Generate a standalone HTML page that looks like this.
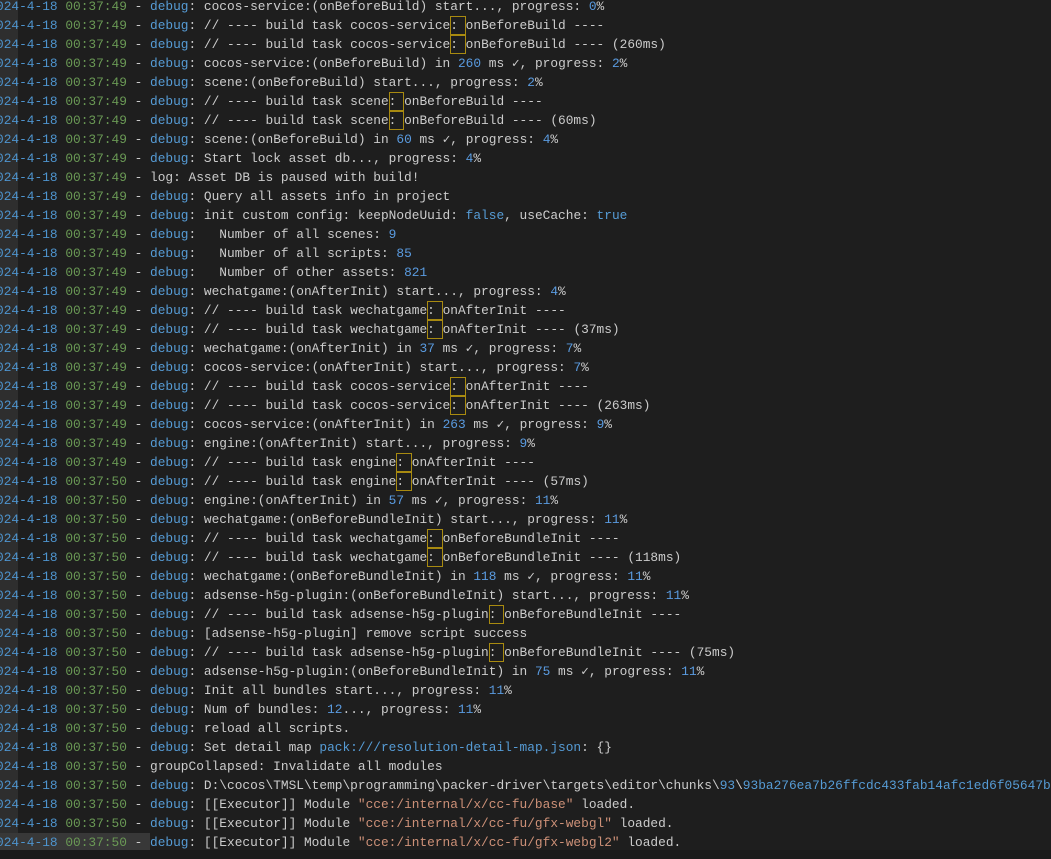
<!DOCTYPE html>
<html><head><meta charset="utf-8"><style>
html,body{margin:0;padding:0;background:#1e1e1e;width:1051px;height:859px;overflow:hidden;}
#strip{position:absolute;left:0;top:0;width:18px;height:850px;background:#2e2e2e;}
#hl{position:absolute;left:0;top:833px;width:150px;height:17px;background:#383838;}
#bot{position:absolute;left:0;top:850px;width:1051px;height:9px;background:#1a1a1a;}
#log{position:absolute;left:-11.7px;top:-3.5px;font-family:"Liberation Mono",monospace;font-size:12.83px;line-height:19px;color:#cccccc;white-space:pre;}
.d{color:#4e94ce}.t{color:#6a9955}.k{color:#569cd6}.n{color:#5a9be0}.s{color:#ce9178}
.b{outline:1px solid #a88a10;outline-offset:-1px;display:inline-block;height:19px;vertical-align:top}
</style></head><body>
<div id="strip"></div><div id="hl"></div><div id="bot"></div>
<div id="log"><span class="d">2024-4-18</span> <span class="t">00:37:49</span> - <span class="k">debug</span>: cocos-service:(onBeforeBuild) start..., progress: <span class="n">0</span>%
<span class="d">2024-4-18</span> <span class="t">00:37:49</span> - <span class="k">debug</span>: // ---- build task cocos-service<span class="b">: </span>onBeforeBuild ----
<span class="d">2024-4-18</span> <span class="t">00:37:49</span> - <span class="k">debug</span>: // ---- build task cocos-service<span class="b">: </span>onBeforeBuild ---- (260ms)
<span class="d">2024-4-18</span> <span class="t">00:37:49</span> - <span class="k">debug</span>: cocos-service:(onBeforeBuild) in <span class="n">260</span> ms ✓, progress: <span class="n">2</span>%
<span class="d">2024-4-18</span> <span class="t">00:37:49</span> - <span class="k">debug</span>: scene:(onBeforeBuild) start..., progress: <span class="n">2</span>%
<span class="d">2024-4-18</span> <span class="t">00:37:49</span> - <span class="k">debug</span>: // ---- build task scene<span class="b">: </span>onBeforeBuild ----
<span class="d">2024-4-18</span> <span class="t">00:37:49</span> - <span class="k">debug</span>: // ---- build task scene<span class="b">: </span>onBeforeBuild ---- (60ms)
<span class="d">2024-4-18</span> <span class="t">00:37:49</span> - <span class="k">debug</span>: scene:(onBeforeBuild) in <span class="n">60</span> ms ✓, progress: <span class="n">4</span>%
<span class="d">2024-4-18</span> <span class="t">00:37:49</span> - <span class="k">debug</span>: Start lock asset db..., progress: <span class="n">4</span>%
<span class="d">2024-4-18</span> <span class="t">00:37:49</span> - log: Asset DB is paused with build!
<span class="d">2024-4-18</span> <span class="t">00:37:49</span> - <span class="k">debug</span>: Query all assets info in project
<span class="d">2024-4-18</span> <span class="t">00:37:49</span> - <span class="k">debug</span>: init custom config: keepNodeUuid: <span class="k">false</span>, useCache: <span class="k">true</span>
<span class="d">2024-4-18</span> <span class="t">00:37:49</span> - <span class="k">debug</span>:   Number of all scenes: <span class="n">9</span>
<span class="d">2024-4-18</span> <span class="t">00:37:49</span> - <span class="k">debug</span>:   Number of all scripts: <span class="n">85</span>
<span class="d">2024-4-18</span> <span class="t">00:37:49</span> - <span class="k">debug</span>:   Number of other assets: <span class="n">821</span>
<span class="d">2024-4-18</span> <span class="t">00:37:49</span> - <span class="k">debug</span>: wechatgame:(onAfterInit) start..., progress: <span class="n">4</span>%
<span class="d">2024-4-18</span> <span class="t">00:37:49</span> - <span class="k">debug</span>: // ---- build task wechatgame<span class="b">: </span>onAfterInit ----
<span class="d">2024-4-18</span> <span class="t">00:37:49</span> - <span class="k">debug</span>: // ---- build task wechatgame<span class="b">: </span>onAfterInit ---- (37ms)
<span class="d">2024-4-18</span> <span class="t">00:37:49</span> - <span class="k">debug</span>: wechatgame:(onAfterInit) in <span class="n">37</span> ms ✓, progress: <span class="n">7</span>%
<span class="d">2024-4-18</span> <span class="t">00:37:49</span> - <span class="k">debug</span>: cocos-service:(onAfterInit) start..., progress: <span class="n">7</span>%
<span class="d">2024-4-18</span> <span class="t">00:37:49</span> - <span class="k">debug</span>: // ---- build task cocos-service<span class="b">: </span>onAfterInit ----
<span class="d">2024-4-18</span> <span class="t">00:37:49</span> - <span class="k">debug</span>: // ---- build task cocos-service<span class="b">: </span>onAfterInit ---- (263ms)
<span class="d">2024-4-18</span> <span class="t">00:37:49</span> - <span class="k">debug</span>: cocos-service:(onAfterInit) in <span class="n">263</span> ms ✓, progress: <span class="n">9</span>%
<span class="d">2024-4-18</span> <span class="t">00:37:49</span> - <span class="k">debug</span>: engine:(onAfterInit) start..., progress: <span class="n">9</span>%
<span class="d">2024-4-18</span> <span class="t">00:37:49</span> - <span class="k">debug</span>: // ---- build task engine<span class="b">: </span>onAfterInit ----
<span class="d">2024-4-18</span> <span class="t">00:37:50</span> - <span class="k">debug</span>: // ---- build task engine<span class="b">: </span>onAfterInit ---- (57ms)
<span class="d">2024-4-18</span> <span class="t">00:37:50</span> - <span class="k">debug</span>: engine:(onAfterInit) in <span class="n">57</span> ms ✓, progress: <span class="n">11</span>%
<span class="d">2024-4-18</span> <span class="t">00:37:50</span> - <span class="k">debug</span>: wechatgame:(onBeforeBundleInit) start..., progress: <span class="n">11</span>%
<span class="d">2024-4-18</span> <span class="t">00:37:50</span> - <span class="k">debug</span>: // ---- build task wechatgame<span class="b">: </span>onBeforeBundleInit ----
<span class="d">2024-4-18</span> <span class="t">00:37:50</span> - <span class="k">debug</span>: // ---- build task wechatgame<span class="b">: </span>onBeforeBundleInit ---- (118ms)
<span class="d">2024-4-18</span> <span class="t">00:37:50</span> - <span class="k">debug</span>: wechatgame:(onBeforeBundleInit) in <span class="n">118</span> ms ✓, progress: <span class="n">11</span>%
<span class="d">2024-4-18</span> <span class="t">00:37:50</span> - <span class="k">debug</span>: adsense-h5g-plugin:(onBeforeBundleInit) start..., progress: <span class="n">11</span>%
<span class="d">2024-4-18</span> <span class="t">00:37:50</span> - <span class="k">debug</span>: // ---- build task adsense-h5g-plugin<span class="b">: </span>onBeforeBundleInit ----
<span class="d">2024-4-18</span> <span class="t">00:37:50</span> - <span class="k">debug</span>: [adsense-h5g-plugin] remove script success
<span class="d">2024-4-18</span> <span class="t">00:37:50</span> - <span class="k">debug</span>: // ---- build task adsense-h5g-plugin<span class="b">: </span>onBeforeBundleInit ---- (75ms)
<span class="d">2024-4-18</span> <span class="t">00:37:50</span> - <span class="k">debug</span>: adsense-h5g-plugin:(onBeforeBundleInit) in <span class="n">75</span> ms ✓, progress: <span class="n">11</span>%
<span class="d">2024-4-18</span> <span class="t">00:37:50</span> - <span class="k">debug</span>: Init all bundles start..., progress: <span class="n">11</span>%
<span class="d">2024-4-18</span> <span class="t">00:37:50</span> - <span class="k">debug</span>: Num of bundles: <span class="n">12</span>..., progress: <span class="n">11</span>%
<span class="d">2024-4-18</span> <span class="t">00:37:50</span> - <span class="k">debug</span>: reload all scripts.
<span class="d">2024-4-18</span> <span class="t">00:37:50</span> - <span class="k">debug</span>: Set detail map <span class="k">pack:///resolution-detail-map.json</span>: {}
<span class="d">2024-4-18</span> <span class="t">00:37:50</span> - groupCollapsed: Invalidate all modules
<span class="d">2024-4-18</span> <span class="t">00:37:50</span> - <span class="k">debug</span>: D:\cocos\TMSL\temp\programming\packer-driver\targets\editor\chunks\<span class="k">93</span>\<span class="k">93ba276ea7b26ffcdc433fab14afc1ed6f05647b</span>
<span class="d">2024-4-18</span> <span class="t">00:37:50</span> - <span class="k">debug</span>: [[Executor]] Module <span class="s">"cce:/internal/x/cc-fu/base"</span> loaded.
<span class="d">2024-4-18</span> <span class="t">00:37:50</span> - <span class="k">debug</span>: [[Executor]] Module <span class="s">"cce:/internal/x/cc-fu/gfx-webgl"</span> loaded.
<span class="d">2024-4-18</span> <span class="t">00:37:50</span> - <span class="k">debug</span>: [[Executor]] Module <span class="s">"cce:/internal/x/cc-fu/gfx-webgl2"</span> loaded.</div>
</body></html>
